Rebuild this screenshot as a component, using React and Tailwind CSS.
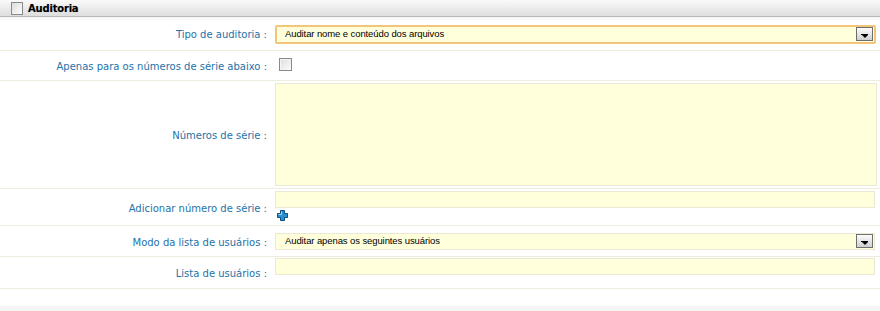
import React from "react";

function Arrow() {
  return (
    <div className="w-[17px] h-[14px] border border-[#6e6e6e] bg-gradient-to-b from-[#fdfdfd] to-[#cfcfcf] flex items-end justify-center pb-[2px]">
      <div className="flex flex-col items-center">
        <div className="w-[7px] h-[1px] bg-black" />
        <div className="w-0 h-0 border-l-[3px] border-r-[3px] border-t-[3px] border-l-transparent border-r-transparent border-t-black" />
      </div>
    </div>
  );
}

function Check() {
  return (
    <div className="w-[13px] h-[13px] border border-[#8a8a8a] bg-gradient-to-br from-[#dcdcdc] to-[#fdfdfd] shadow-[inset_1px_1px_0_#f4f4f4]" />
  );
}

function Label({ children }) {
  return (
    <div className="w-[275px] pr-[8px] pt-[2px] text-right text-[10px] text-[#2472a8] font-['DejaVu_Sans',sans-serif] shrink-0">
      {children}
    </div>
  );
}

export default function App() {
  return (
    <div className="w-[880px] h-[311px] bg-white overflow-hidden relative">
      <div className="h-[17px] bg-gradient-to-b from-[#fafafa] to-[#dedede] border-b border-[#b9b9b9] flex items-center pl-[11px] gap-[5px]">
        <div className="w-[12px] h-[13px] border border-[#8a8a8a] bg-gradient-to-br from-[#dcdcdc] to-[#fdfdfd]" />
        <span className="font-['DejaVu_Sans',sans-serif] font-bold text-[10px] tracking-[-0.2px] text-black [text-shadow:0_0_1px_#9ab]">
          Auditoria
        </span>
      </div>
      <div className="h-[34px] flex items-center border-b border-[#eeecda] bg-gradient-to-b from-[#f4f4f4] via-white via-[15%] to-white">
        <Label>Tipo de auditoria :</Label>
        <div className="flex-1 pr-[4px] pt-[1px]">
          <div className="h-[19px] border-2 border-[#f1c57a] rounded-[2px] bg-[#ffffdc] flex items-center justify-between pl-[8px] pr-[1px]">
            <span className="font-['Liberation_Sans',sans-serif] text-[9.5px] tracking-[-0.1px] text-black">
              Auditar nome e conteúdo dos arquivos
            </span>
            <Arrow />
          </div>
        </div>
      </div>
      <div className="h-[30px] flex items-center border-b border-[#eeecda]">
        <Label>Apenas para os números de série abaixo :</Label>
        <div className="flex-1 pl-[4px] pb-[3px]">
          <Check />
        </div>
      </div>
      <div className="h-[108px] flex items-center border-b border-[#eeecda]">
        <Label>Números de série :</Label>
        <div className="flex-1 pr-[3px] self-start pt-[2px]">
          <div className="h-[103px] border border-[#ebe8d4] bg-[#ffffdc]" />
        </div>
      </div>
      <div className="h-[37px] flex items-center border-b border-[#eeecda]">
        <Label>Adicionar número de série :</Label>
        <div className="flex-1 pr-[5px] self-start pt-[2px] flex flex-col items-start">
          <div className="h-[17px] w-full border border-[#ebe8d4] bg-[#ffffdc]" />
          <svg width="11" height="11" viewBox="0 0 11 11" className="ml-[2px] mt-[2px]">
            <path d="M3.5 0.5h4v3h3v4h-3v3h-4v-3h-3v-4h3z" fill="#2a8fd0" stroke="#0d4f7e" strokeWidth="1" />
            <path d="M4.5 1.5v3h-3" fill="none" stroke="#9fd8f8" strokeWidth="1" />
          </svg>
        </div>
      </div>
      <div className="h-[31px] flex items-center border-b border-[#eeecda]">
        <Label>Modo da lista de usuários :</Label>
        <div className="flex-1 pr-[5px]">
          <div className="h-[17px] border border-[#ebe8d4] bg-[#ffffdc] flex items-center justify-between pl-[9px] pr-[1px]">
            <span className="font-['Liberation_Sans',sans-serif] text-[9.5px] tracking-[-0.1px] text-black">
              Auditar apenas os seguintes usuários
            </span>
            <Arrow />
          </div>
        </div>
      </div>
      <div className="h-[32px] flex items-center border-b border-[#eeecda]">
        <Label>Lista de usuários :</Label>
        <div className="flex-1 pr-[5px] self-start pt-[1px]">
          <div className="h-[17px] border border-[#ebe8d4] bg-[#ffffdc]" />
        </div>
      </div>
      <div className="h-[17px]" />
      <div className="h-[10px] bg-[#f5f5f5]" />
    </div>
  );
}
